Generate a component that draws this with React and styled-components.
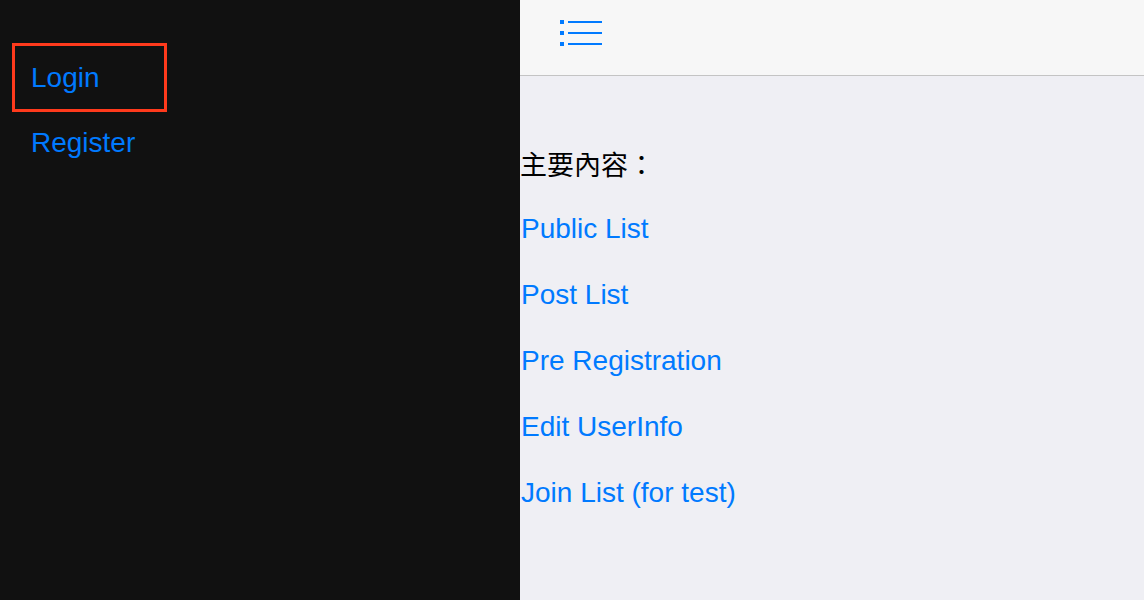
import React from "react";
import styled, { createGlobalStyle } from "styled-components";

const GlobalStyle = createGlobalStyle`
  html, body {
    margin: 0;
    padding: 0;
    height: 100%;
  }
  body {
    font-family: "Liberation Sans", "Noto Sans CJK TC", Arial, sans-serif;
    background: #efeff4;
  }
`;

const Layout = styled.div`
  display: flex;
  width: 100%;
  height: 600px;
  overflow: hidden;
`;

const Sidebar = styled.nav`
  width: 520px;
  flex: none;
  background: #111111;
  padding-top: 44px;
  box-sizing: border-box;
`;

const NavItem = styled.a`
  display: flex;
  align-items: center;
  box-sizing: border-box;
  height: 66px;
  padding-left: 31px;
  font-size: 28px;
  color: #007aff;
  text-decoration: none;
  cursor: pointer;

  ${(p) =>
    p.$active &&
    `
    width: 155px;
    height: 69px;
    margin: -1px 0 -2px 12px;
    padding-left: 16px;
    border: 3px solid #ff3a1c;
  `}
`;

const Main = styled.div`
  flex: 1;
  display: flex;
  flex-direction: column;
  background: #efeff4;
`;

const Toolbar = styled.header`
  height: 76px;
  box-sizing: border-box;
  background: #f7f7f7;
  border-bottom: 1px solid #c4c4c4;
  padding: 20px 0 0 40px;
`;

const MenuButton = styled.button`
  border: 0;
  background: none;
  padding: 0;
  display: block;
  cursor: pointer;
`;

const Content = styled.section`
  padding-top: 54px;
`;

const Row = styled.div`
  height: 66px;
  display: flex;
  align-items: center;
  font-size: 28px;
  color: ${(p) => (p.$link ? "#007aff" : "#000")};
  padding-left: 1px;
  cursor: ${(p) => (p.$link ? "pointer" : "default")};
`;

const Label = styled.span`
  font-family: "Noto Sans CJK TC", "Liberation Sans", sans-serif;
  font-size: 27px;
  margin-left: -1px;
`;

function ListIcon() {
  return (
    <svg width="42" height="27" viewBox="0 0 42 27" fill="#007aff">
      {[0, 11, 22].map((y) => (
        <g key={y}>
          <rect x="0" y={y} width="4" height="4" />
          <rect x="8" y={y + 1} width="34" height="2" />
        </g>
      ))}
    </svg>
  );
}

const links = [
  "Public List",
  "Post List",
  "Pre Registration",
  "Edit UserInfo",
  "Join List (for test)",
];

export default function App() {
  return (
    <>
      <GlobalStyle />
      <Layout>
        <Sidebar>
          <NavItem $active>Login</NavItem>
          <NavItem>Register</NavItem>
        </Sidebar>
        <Main>
          <Toolbar>
            <MenuButton aria-label="menu">
              <ListIcon />
            </MenuButton>
          </Toolbar>
          <Content>
            <Row>
              <Label>主要內容：</Label>
            </Row>
            {links.map((l) => (
              <Row key={l} $link>
                {l}
              </Row>
            ))}
          </Content>
        </Main>
      </Layout>
    </>
  );
}
